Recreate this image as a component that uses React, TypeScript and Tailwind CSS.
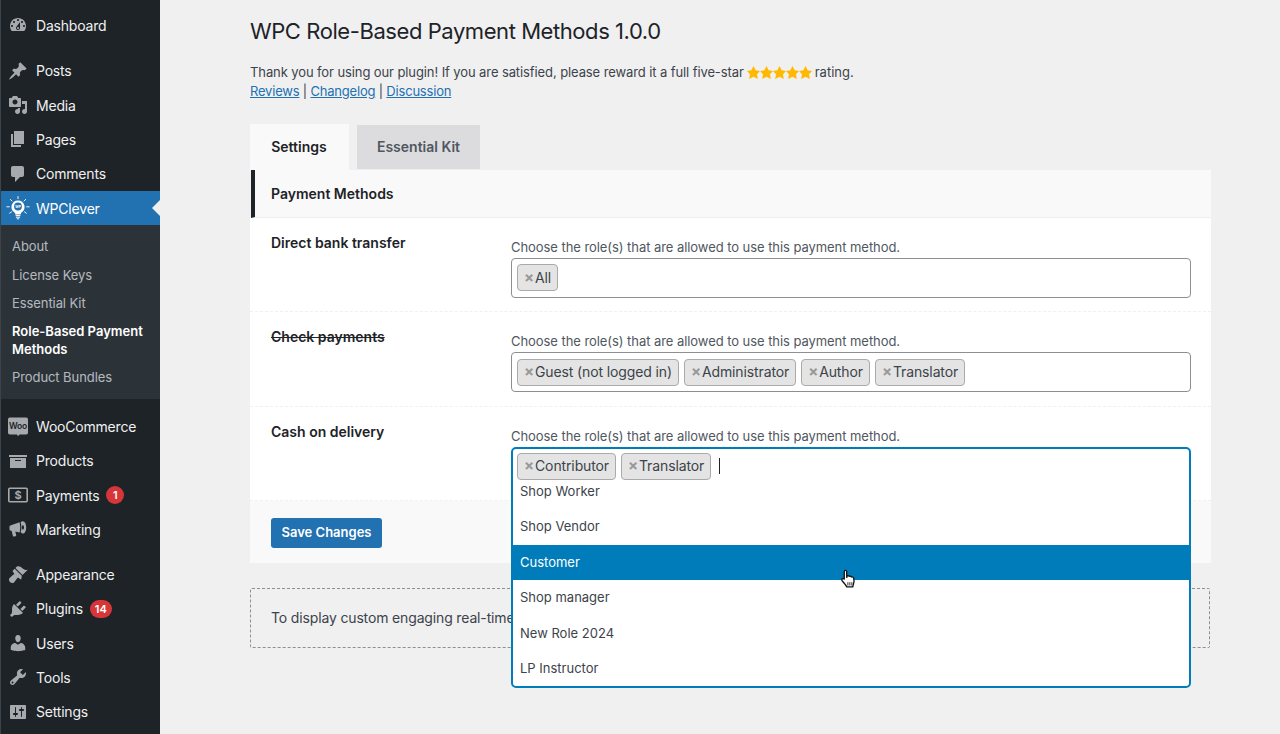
import React from "react";

const P: Record<string, string> = {
  dashboard: "M3.76 16h12.48c1.1-1.37 1.76-3.11 1.76-5 0-4.42-3.58-8-8-8s-8 3.58-8 8c0 1.89.66 3.63 1.76 5zM10 4c.55 0 1 .45 1 1s-.45 1-1 1-1-.45-1-1 .45-1 1-1zM6 6c.55 0 1 .45 1 1s-.45 1-1 1-1-.45-1-1 .45-1 1-1zm8 0c.55 0 1 .45 1 1s-.45 1-1 1-1-.45-1-1 .45-1 1-1zm-5.37 5.55L12 7v6c0 1.1-.9 2-2 2s-2-.9-2-2c0-.57.24-1.08.63-1.45zM4 10c.55 0 1 .45 1 1s-.45 1-1 1-1-.45-1-1 .45-1 1-1zm12 0c.55 0 1 .45 1 1s-.45 1-1 1-1-.45-1-1 .45-1 1-1zm-5 3c0-.55-.45-1-1-1s-1 .45-1 1 .45 1 1 1 1-.45 1-1z",
  post: "M10.44 3.02l1.82-1.82 6.36 6.35-1.83 1.82c-1.05-.68-2.48-.57-3.41.36l-.75.75c-.92.93-1.04 2.35-.35 3.41l-1.83 1.82-2.41-2.41-2.8 2.79c-.42.42-3.38 2.71-3.8 2.29s1.86-3.39 2.28-3.81l2.79-2.79L4.1 9.36l1.83-1.82c1.05.69 2.48.57 3.4-.36l.75-.75c.93-.92 1.05-2.35.36-3.41z",
  media: "M13 11V4c0-.55-.45-1-1-1h-1.67L9 1H5L3.67 3H2c-.55 0-1 .45-1 1v7c0 .55.45 1 1 1h10c.55 0 1-.45 1-1zM7 4.5c1.38 0 2.5 1.12 2.5 2.5S8.38 9.5 7 9.5 4.5 8.38 4.5 7 5.62 4.5 7 4.5zM14 6h5v10.5c0 1.38-1.12 2.5-2.5 2.5S14 17.88 14 16.5s1.12-2.5 2.5-2.5c.17 0 .34.02.5.05V9h-3V6zm-4 8.05V13h2v3.5c0 1.38-1.12 2.5-2.5 2.5S7 17.88 7 16.5 8.12 14 9.5 14c.17 0 .34.02.5.05z",
  page: "M6 15V2h10v13H6zm-1 1h8v2H3V5h2v11z",
  comments: "M5 2h9c1.1 0 2 .9 2 2v7c0 1.1-.9 2-2 2h-2l-5 5v-5H5c-1.1 0-2-.9-2-2V4c0-1.1.9-2 2-2z",
  products: "M19 4v2H1V4h18zM2 7h16v10H2V7zm11 3V9H7v1h6z",
  appearance: "M14.48 11.06L7.41 3.99l1.5-1.5c.5-.56 2.3-.47 3.51.32 1.21.8 1.43 1.28 2.91 2.1 1.18.64 2.45 1.26 4.45.85zm-.71.71L6.7 4.7 4.93 6.47c-.39.39-.39 1.02 0 1.41l1.06 1.06c.39.39.39 1.03 0 1.42-.6.6-1.43 1.11-2.21 1.69-.35.26-.7.53-1.01.84C1.43 13.71 1 14.65 1 15.65 1 17.5 2.5 19 4.35 19c1 0 1.94-.43 2.58-1.77.31-.31.58-.66.84-1.01.58-.78 1.09-1.61 1.69-2.21.39-.39 1.03-.39 1.42 0l1.06 1.06c.39.39 1.02.39 1.41 0z",
  plugins: "M13.11 4.36L9.87 7.6 8 5.73l3.24-3.24c.35-.34 1.05-.2 1.56.32.52.51.66 1.21.31 1.55zm-8 1.77l.91-1.12 9.01 9.01-1.19.84c-.71.71-2.63 1.16-3.82 1.16H6.14L4.9 17.26c-.59.59-1.54.59-2.12 0-.59-.58-.59-1.53 0-2.12l1.24-1.24v-3.88c0-1.13.4-3.19 1.09-3.89zm7.26 3.97l3.24-3.24c.34-.35 1.04-.21 1.55.31.52.51.66 1.21.31 1.55l-3.24 3.25z",
  users: "M10 9.25c-2.27 0-2.73-3.44-2.73-3.44C7 4.02 7.82 2 9.97 2c2.16 0 2.98 2.02 2.71 3.81 0 0-.41 3.44-2.68 3.44zm0 2.57L12.72 10c2.39 0 4.52 2.33 4.52 4.53v2.49s-3.65 1.13-7.24 1.13c-3.65 0-7.24-1.13-7.24-1.13v-2.49c0-2.25 1.94-4.48 4.47-4.48z",
  tools: "M16.68 9.77c-1.34 1.34-3.3 1.67-4.95.99l-5.41 6.52c-.99.99-2.59.99-3.58 0s-.99-2.59 0-3.57l6.52-5.42c-.68-1.65-.35-3.61.99-4.95 1.28-1.28 3.12-1.62 4.72-1.06l-2.89 2.89 2.82 2.82 2.86-2.87c.53 1.58.18 3.39-1.08 4.67zM3.81 16.21c.4.39 1.04.39 1.43 0 .4-.4.4-1.04 0-1.43-.39-.4-1.03-.4-1.43 0-.39.39-.39 1.03 0 1.43z",
  settings: "M18 16V4c0-.55-.45-1-1-1H3c-.55 0-1 .45-1 1v12c0 .55.45 1 1 1h14c.55 0 1-.45 1-1zM8 11h1c.55 0 1 .45 1 1s-.45 1-1 1H8v1.5c0 .28-.22.5-.5.5s-.5-.22-.5-.5V13H6c-.55 0-1-.45-1-1s.45-1 1-1h1V5.5c0-.28.22-.5.5-.5s.5.22.5.5V11zm5-2h-1c-.55 0-1-.45-1-1s.45-1 1-1h1V5.5c0-.28.22-.5.5-.5s.5.22.5.5V7h1c.55 0 1 .45 1 1s-.45 1-1 1h-1v5.5c0 .28-.22.5-.5.5s-.5-.22-.5-.5V9z",
  marketing: "M1.5 7.6c0-.5.3-.9.8-1.1L11.6 3.2c.3 1.6.6 3.4.6 5.3s-.3 3.5-.6 4.9l-4.3-.9.9 3.7c.1.5-.2.9-.7 1l-1.7.3c-.4.1-.8-.2-.9-.6l-1.2-5-1.3-.3c-.5-.1-.9-.6-.9-1.1zM14.8 2.2c1.9 0 3.4 2.8 3.4 6.2s-1.5 6.2-3.4 6.2c-.9 0-1.6-.6-2.2-1.5.5-1.4.8-3 .8-4.7s-.3-3.4-.8-4.8c.6-.9 1.3-1.4 2.2-1.4zm.1 4.1c-.6 0-1 .9-1 2.1s.4 2.1 1 2.1 1.1-.9 1.1-2.1-.5-2.1-1.1-2.1z",
};

const Dash = ({ name }: { name: string }) => (
  <svg viewBox="0 0 20 20" className="w-5 h-5 fill-[#a7aaad]">
    <path fillRule="evenodd" d={P[name]} />
  </svg>
);

const Woo = () => (
  <svg viewBox="0 0 20 20" className="w-5 h-5">
    <path d="M1.800 0.500h16.400A1.800 1.800 0 0 1 20 2.300v13.400a1.800 1.800 0 0 1-1.800 1.800H11.500l-1.500 1.800-1-1.800H1.800A1.800 1.800 0 0 1 0 15.700V2.300A1.800 1.800 0 0 1 1.800.5z" fill="#a7aaad" />
    <text x="10" y="12" textAnchor="middle" fontSize="8.500" fontWeight="600" fill="#1d2327" fontFamily="Inter, sans-serif">Woo</text>
  </svg>
);

const Pay = () => (
  <svg viewBox="0 0 20 20" className="w-5 h-5">
    <rect x="0.800" y="3.300" width="18.400" height="13.400" rx="1" fill="none" stroke="#a7aaad" strokeWidth="1.600" />
    <text x="10" y="14" textAnchor="middle" fontSize="11" fontWeight="700" fill="#a7aaad" fontFamily="Inter, sans-serif">$</text>
  </svg>
);

const Bulb = () => (
  <svg viewBox="0 0 24 24" className="w-6 h-6" fill="none" stroke="#fff">
    <g strokeWidth="0.900" strokeLinecap="round">
      <path d="M12 .5v2.200M4.300 3.400l1.700 1.600M19.700 3.400L18 5M.8 10.800h2.600M20.600 10.800h2.600M3.600 17.200l1.900-1.300M20.400 17.200l-1.900-1.300" />
    </g>
    <path d="M12 4.400a6.500 6.500 0 0 0-3.500 12c.7.5.8 1.200.8 2h5.400c0-.8.1-1.500.8-2a6.500 6.500 0 0 0-3.500-12z" fill="#fff" stroke="none" />
    <circle cx="12" cy="10.500" r="3.900" fill="#2271b1" stroke="none" />
    <text x="12" y="11.700" textAnchor="middle" fontSize="3.400" fontWeight="700" fill="#fff" stroke="none" fontFamily="Inter, sans-serif">WP</text>
    <path d="M9.600 19.600h4.800M9.900 21.200h4.200M10.800 22.800h2.400" stroke="#fff" strokeWidth="1" />
  </svg>
);

const Star = () => (
  <svg viewBox="1 1 18 18" className="w-[13px] h-[13px] fill-[#ffb900]">
    <path d="M10 1l3 6 6 .75-4.120 4.620L16 19l-6-3-6 3 1.130-6.630L1 7.750 7 7z" />
  </svg>
);

const Item = ({
  icon,
  label,
  badge,
  active,
}: {
  icon: React.ReactNode;
  label: string;
  badge?: string;
  active?: boolean;
}) => (
  <div className={`relative flex items-center h-[34.3px] text-[14px] tracking-[-0.2px] ${active ? "bg-[#2271b1] text-white" : "text-[#f0f0f1]"}`}>
    <div className="w-[34px] mr-[1px] flex justify-center shrink-0">{icon}</div>
    <span>{label}</span>
    {badge && (
      <span className="ml-[7px] min-w-[18px] h-[18px] px-[5px] rounded-full bg-[#d63638] text-white text-[11px] font-semibold flex items-center justify-center tracking-normal">
        {badge}
      </span>
    )}
    {active && (
      <span className="absolute right-0 top-1/2 -translate-y-1/2 border-y-[8px] border-y-transparent border-r-[8px] border-r-[#f0f0f1]" />
    )}
  </div>
);

const Tag = ({ label }: { label: string }) => (
  <span className="flex items-center h-[27px] pl-[6px] pr-[6px] pb-[1px] bg-[#e4e4e4] border border-[#aaaaaa] rounded-[4px] text-[14px] tracking-[-0.12px] text-[#3c434a] whitespace-nowrap">
    <span className="text-[#999999] font-bold text-[15px] w-[11px] leading-none">×</span>
    {label}
  </span>
);

const Desc = () => (
  <div className="text-[13px] leading-[19px] mt-[1px] mb-[1px] tracking-[-0.06px] text-[#50575e]">Choose the role(s) that are allowed to use this payment method.</div>
);

const Row = ({ label, strike, children }: { label: string; strike?: boolean; children: React.ReactNode }) => (
  <div className="flex pl-[21px] pr-[20px] pt-[19px] pb-[13.5px] border-b border-dashed border-[#f0f0f1] bg-white">
    <div className={`w-[240px] shrink-0 text-[14px] leading-[19px] font-semibold text-[#1d2327] -mt-[4px] ${strike ? "line-through" : ""}`}>{label}</div>
    <div className="flex-1">{children}</div>
  </div>
);

export default function App() {
  return (
    <div
      className="flex w-[1280px] h-[734px] overflow-hidden bg-[#f0f0f1] text-[13px] text-[#3c434a]"
      style={{ fontFamily: "Inter, 'Liberation Sans', sans-serif" }}
    >
      <aside className="w-[160px] h-full shrink-0 bg-[#1d2327] border-l border-[#3c434a] pt-[8px] overflow-hidden">
        <Item icon={<Dash name="dashboard" />} label="Dashboard" />
        <div className="h-[11.4px]" />
        <Item icon={<Dash name="post" />} label="Posts" />
        <Item icon={<Dash name="media" />} label="Media" />
        <Item icon={<Dash name="page" />} label="Pages" />
        <Item icon={<Dash name="comments" />} label="Comments" />
        <Item icon={<Bulb />} label="WPClever" active />
        <div className="bg-[#2c3338] h-[174px] pt-[6.8px] pl-[11px] text-[13px] leading-[18px] tracking-[-0.08px] text-[#f0f6fcb3]">
          <div className="py-[5.2px]">About</div>
          <div className="py-[5.2px]">License Keys</div>
          <div className="py-[5.2px]">Essential Kit</div>
          <div className="py-[5.2px] font-semibold text-white tracking-normal">Role-Based Payment Methods</div>
          <div className="py-[5px]">Product Bundles</div>
        </div>
        <div className="h-[10.2px]" />
        <Item icon={<Woo />} label="WooCommerce" />
        <Item icon={<Dash name="products" />} label="Products" />
        <Item icon={<Pay />} label="Payments" badge="1" />
        <Item icon={<Dash name="marketing" />} label="Marketing" />
        <div className="h-[10.8px]" />
        <Item icon={<Dash name="appearance" />} label="Appearance" />
        <Item icon={<Dash name="plugins" />} label="Plugins" badge="14" />
        <Item icon={<Dash name="users" />} label="Users" />
        <Item icon={<Dash name="tools" />} label="Tools" />
        <Item icon={<Dash name="settings" />} label="Settings" />
      </aside>

      <main className="w-[961px] ml-[90px] shrink-0 relative">
        <h1 className="text-[22px] leading-[30px] tracking-[-0.43px] text-[#1d2327] font-normal mt-[16px]">WPC Role-Based Payment Methods 1.0.0</h1>
        <div className="mt-[17px] leading-[19px]">
          <div className="flex items-center tracking-[-0.1px]">
            Thank you for using our plugin! If you are satisfied, please reward it a full five-star
            <span className="flex mx-[3px]">
              <Star /><Star /><Star /><Star /><Star />
            </span>
            <span className="tracking-normal">rating.</span>
          </div>
          <div className="tracking-[-0.2px]">
            <a className="text-[#2271b1] underline">Reviews</a> | <a className="text-[#2271b1] underline">Changelog</a> |{" "}
            <a className="text-[#2271b1] underline">Discussion</a>
          </div>
        </div>

        <div className="flex items-center gap-[8px] mt-[23px] h-[46px]">
          <div className="h-[46px] w-[99px] pr-[1px] pb-[1px] flex items-center justify-center bg-[#f9f9f9] text-[14px] font-semibold text-[#1d2327]">Settings</div>
          <div className="h-[44px] w-[123px] pb-[1px] flex items-center justify-center bg-[#dcdcde] text-[14px] font-semibold text-[#50575e]">Essential Kit</div>
        </div>

        <div>
          <div className="h-[47.9px] flex items-center bg-[#f9f9f9] ml-[1px] border-l-[4px] border-[#1d2327] pl-[16px] text-[14px] font-semibold text-[#1d2327] border-b border-b-[#f0f0f1]">
            Payment Methods
          </div>
          <Row label="Direct bank transfer">
            <Desc />
            <div className="h-[40px] bg-white border border-[#8c8f94] rounded-[4px] flex items-center gap-[5px] px-[5px]">
              <Tag label="All" />
            </div>
          </Row>
          <Row label="Check payments" strike>
            <Desc />
            <div className="h-[40px] bg-white border border-[#8c8f94] rounded-[4px] flex items-center gap-[5px] px-[5px]">
              <Tag label="Guest (not logged in)" />
              <Tag label="Administrator" />
              <Tag label="Author" />
              <Tag label="Translator" />
            </div>
          </Row>
          <Row label="Cash on delivery">
            <Desc />
            <div className="h-[40px] relative z-10">
              <div className="absolute left-0 right-0 top-0 h-[241.5px] bg-white border-2 border-[#007cba] rounded-[5px] flex flex-col overflow-hidden">
                <div className="h-[32px] shrink-0 flex items-center gap-[5px] px-[4px] pt-[3px]">
                  <Tag label="Contributor" />
                  <Tag label="Translator" />
                  <span className="w-px h-[16px] bg-[#1d2327] ml-[3px]" />
                </div>
                <div className="flex-1 min-h-0 overflow-hidden flex flex-col justify-end text-[13px] text-[#3c434a]">
                  {["Shop Worker", "Shop Vendor", "Customer", "Shop manager", "New Role 2024", "LP Instructor"].map((o) => (
                    <div
                      key={o}
                      className={`h-[35.4px] shrink-0 flex items-center pl-[7px] ${o === "Customer" ? "bg-[#007cba] text-white" : ""}`}
                    >
                      {o}
                    </div>
                  ))}
                </div>
              </div>
            </div>
          </Row>
          <div className="h-[61.6px] bg-[#f9f9f9] pl-[21px] pt-[2px] flex items-center">
            <button className="h-[30px] w-[111px] rounded-[3px] bg-[#2271b1] text-white text-[13px] font-semibold">Save Changes</button>
          </div>
        </div>

        <div className="mt-[25px] mr-[1px] h-[60px] border border-dashed border-[#8c8f94] rounded-[2px] flex items-center px-[20px] text-[14px] tracking-[-0.15px] whitespace-nowrap">
          To display custom engaging real-time messages on any part of your website
        </div>

        <svg viewBox="0 0 16 20" className="absolute left-[589.5px] top-[569px] w-[18px] h-[22px] z-20">
          <path
            d="M4.600 1.200c.8 0 1.300.6 1.300 1.300v5l.3-.1V6.200c.9-.5 1.700-.2 2 .5.8-.4 1.600-.1 1.900.6.8-.4 1.800 0 2.100.9.5 1.500.4 4.200-.2 5.800-.3.8-.5 1.500-.6 2.300H5.900c-.2-.9-.7-1.500-1.300-2.200L1.900 10.900c-.7-.9-.4-1.900.3-2.200.5-.2 1.100 0 1.500.5V2.500c0-.7.3-1.300.9-1.300z"
            fill="#fff"
            stroke="#111"
            strokeWidth="1.200"
            strokeLinejoin="round"
          />
          <path d="M7 12v3M8.800 12v3M10.600 12v3" stroke="#111" strokeWidth="0.800" />
        </svg>
      </main>
    </div>
  );
}
